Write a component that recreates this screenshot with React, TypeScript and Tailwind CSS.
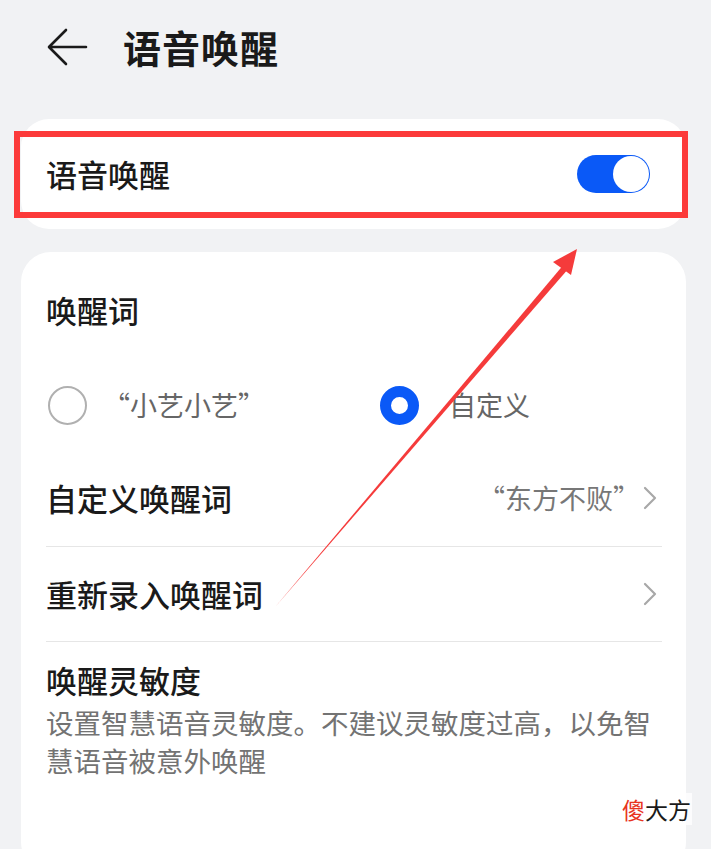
import { useState } from 'react';

const font = { fontFamily: '"Noto Sans CJK SC", "Noto Sans", sans-serif' };

const Chevron = () => (
  <svg width="16" height="24" viewBox="0 0 16 24" className="shrink-0">
    <path d="M3 2 L13 12 L3 22" fill="none" stroke="#a8a8a8" strokeWidth="2.2" strokeLinecap="round" strokeLinejoin="round" />
  </svg>
);

const Radio = ({ checked }: { checked: boolean }) =>
  checked ? (
    <span className="w-[39px] h-[39px] rounded-full border-[11px] border-[#0a59f7] bg-white shrink-0" />
  ) : (
    <span className="w-[39px] h-[39px] rounded-full border-2 border-[#b0b0b0] bg-white shrink-0" />
  );

export default function App() {
  const [on, setOn] = useState(true);
  const [word, setWord] = useState<'xiaoyi' | 'custom'>('custom');

  return (
    <div className="relative w-[711px] h-[849px] overflow-hidden bg-[#f1f2f4] text-[#1a1a1a]" style={font}>
      {/* header */}
      <div className="h-[119px] flex items-start pt-[26px]">
        <div className="ml-[46px] w-[44px] h-[42px] flex items-center">
          <svg width="42" height="38" viewBox="0 0 42 38">
            <path d="M40 19 H4 M20 2 L3 19 L20 36" fill="none" stroke="#1a1a1a" strokeWidth="2.6" strokeLinecap="round" strokeLinejoin="round" />
          </svg>
        </div>
        <h1 className="ml-[33px] text-[38px] leading-[42px] font-bold tracking-[1px]">语音唤醒</h1>
      </div>

      {/* card 1 */}
      <div className="ml-[21px] mr-[25px] h-[110px] bg-white rounded-[28px] flex items-center justify-between pl-[25px] pr-[36px]">
        <span className="text-[31px] font-medium">语音唤醒</span>
        <button
          onClick={() => setOn(!on)}
          className={`w-[73px] h-[38px] rounded-full flex items-center px-[1px] ${on ? 'bg-[#0a59f7] justify-end' : 'bg-[#d0d0d0] justify-start'}`}
        >
          <span className="w-[36px] h-[36px] rounded-full bg-white" />
        </button>
      </div>

      {/* card 2 */}
      <div className="ml-[21px] mr-[25px] mt-[23px] h-[620px] bg-white rounded-[30px] pl-[25px] pr-[24px]">
        <div className="pt-[39px] h-[108px]">
          <div className="text-[31px] leading-[38px] font-medium">唤醒词</div>
        </div>
        <div className="h-[90px] flex items-center text-[27px] text-[#666]">
          <button className="w-[334px] flex items-center" onClick={() => setWord('xiaoyi')}>
            <span className="ml-[2px] flex"><Radio checked={word === 'xiaoyi'} /></span>
            <span className="ml-[16px]">“小艺小艺”</span>
          </button>
          <button className="flex items-center" onClick={() => setWord('custom')}>
            <Radio checked={word === 'custom'} />
            <span className="ml-[30px]">自定义</span>
          </button>
        </div>
        <div className="h-[96px] flex items-center justify-between">
          <span className="text-[31px] font-medium">自定义唤醒词</span>
          <span className="flex items-center gap-[2px] pr-[4px]">
            <span className="text-[27px] text-[#777]">“东方不败”</span>
            <Chevron />
          </span>
        </div>
        <div className="h-px bg-[#e6e6e6]" />
        <div className="h-[94px] flex items-center justify-between">
          <span className="text-[31px] font-medium">重新录入唤醒词</span>
          <span className="pr-[4px] flex"><Chevron /></span>
        </div>
        <div className="h-px bg-[#e6e6e6]" />
        <div className="pt-[19px]">
          <div className="text-[31px] leading-[38px] font-medium">唤醒灵敏度</div>
          <p className="mt-[4px] text-[27.5px] leading-[38px] text-[#737373]">
            设置智慧语音灵敏度。不建议灵敏度过高，以免智慧语音被意外唤醒
          </p>
        </div>
      </div>

      {/* annotation: red box */}
      <div className="absolute left-[14px] top-[131px] w-[674px] h-[87px] border-[6px] border-[#fc3a3a] pointer-events-none" />

      {/* annotation: arrow */}
      <svg className="absolute left-0 top-0 pointer-events-none" width="711" height="849" viewBox="0 0 711 849">
        <polygon points="276,606 565,263 569,268" fill="#f53b3b" />
        <polygon points="577,249 553,262 571,275" fill="#f53b3b" />
      </svg>

      {/* watermark */}
      <div className="absolute left-[621px] top-[793px] text-[23px] leading-[32px] bg-white/80 px-[1px]">
        <span className="text-[#e8341f]">傻</span>
        <span className="text-[#1a1a1a]">大方</span>
      </div>
    </div>
  );
}
